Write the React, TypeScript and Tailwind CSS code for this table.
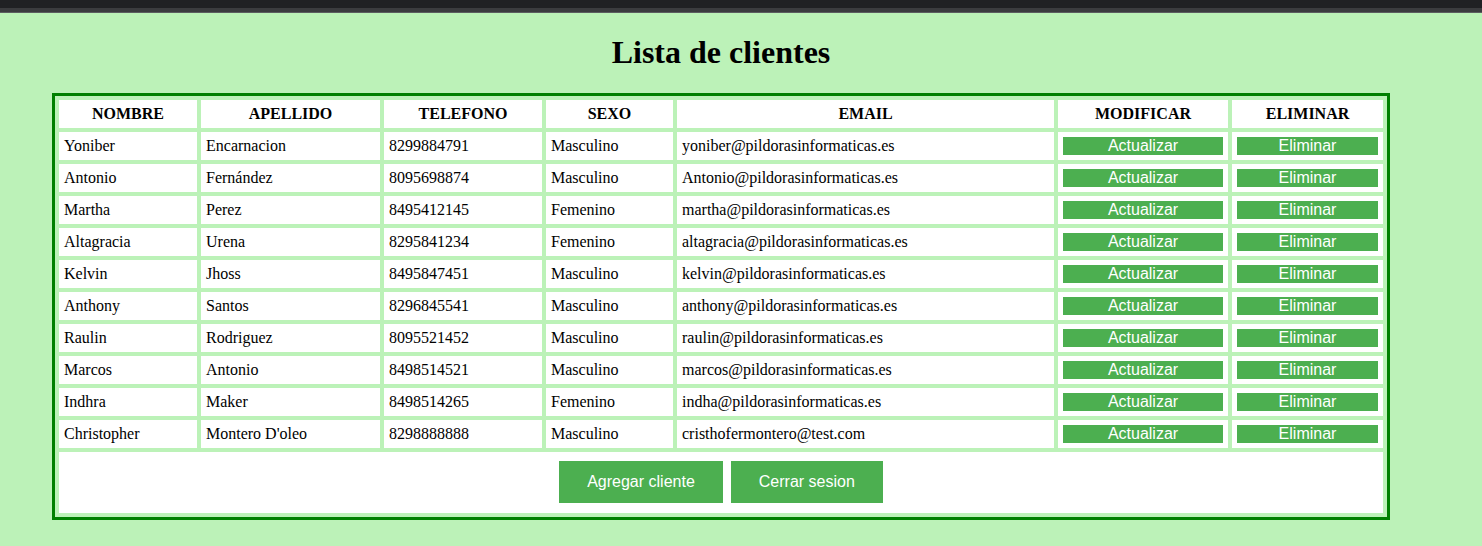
import React from 'react'

const clientes = [
  { nombre: 'Yoniber', apellido: 'Encarnacion', telefono: '8299884791', sexo: 'Masculino', email: 'yoniber@pildorasinformaticas.es' },
  { nombre: 'Antonio', apellido: 'Fernández', telefono: '8095698874', sexo: 'Masculino', email: 'Antonio@pildorasinformaticas.es' },
  { nombre: 'Martha', apellido: 'Perez', telefono: '8495412145', sexo: 'Femenino', email: 'martha@pildorasinformaticas.es' },
  { nombre: 'Altagracia', apellido: 'Urena', telefono: '8295841234', sexo: 'Femenino', email: 'altagracia@pildorasinformaticas.es' },
  { nombre: 'Kelvin', apellido: 'Jhoss', telefono: '8495847451', sexo: 'Masculino', email: 'kelvin@pildorasinformaticas.es' },
  { nombre: 'Anthony', apellido: 'Santos', telefono: '8296845541', sexo: 'Masculino', email: 'anthony@pildorasinformaticas.es' },
  { nombre: 'Raulin', apellido: 'Rodriguez', telefono: '8095521452', sexo: 'Masculino', email: 'raulin@pildorasinformaticas.es' },
  { nombre: 'Marcos', apellido: 'Antonio', telefono: '8498514521', sexo: 'Masculino', email: 'marcos@pildorasinformaticas.es' },
  { nombre: 'Indhra', apellido: 'Maker', telefono: '8498514265', sexo: 'Femenino', email: 'indha@pildorasinformaticas.es' },
  { nombre: 'Christopher', apellido: "Montero D'oleo", telefono: '8298888888', sexo: 'Masculino', email: 'cristhofermontero@test.com' },
]

export default function App() {
  const td = 'bg-white px-[5px] py-[5px] leading-[18px] text-left'
  const th = 'bg-white px-[5px] py-[5px] leading-[18px] font-bold text-center'
  const btn = "block w-full bg-[#4caf50] text-white text-[16px] leading-[18px] font-['Liberation_Sans',Arial,sans-serif]"

  return (
    <div className="min-h-[546px] bg-[#bcf2b8]">
      {/* barra superior del navegador */}
      <div className="h-[8px] bg-[#202124]" />
      <div className="h-[4px] bg-[#3b3c3f]" />
      <div className="h-[1px] bg-[#5c5d60]" />

      <div className="w-[1442px] font-['Liberation_Serif','Times_New_Roman',serif] text-black">
        <h1 className="text-center text-[32px] font-bold leading-[37px] pt-[21px] pb-[22px]">Lista de clientes</h1>

        <table className="mx-auto w-[1338px] table-fixed border-separate border-spacing-[4px] border-[3px] border-[#008000] text-[16px]">
          <thead>
            <tr>
              <th className={`${th} w-[138px]`}>NOMBRE</th>
              <th className={`${th} w-[179px]`}>APELLIDO</th>
              <th className={`${th} w-[158px]`}>TELEFONO</th>
              <th className={`${th} w-[127px]`}>SEXO</th>
              <th className={`${th} w-[377px]`}>EMAIL</th>
              <th className={`${th} w-[170px]`}>MODIFICAR</th>
              <th className={`${th} w-[151px]`}>ELIMINAR</th>
            </tr>
          </thead>
          <tbody>
            {clientes.map((c) => (
              <tr key={c.telefono}>
                <td className={td}>{c.nombre}</td>
                <td className={td}>{c.apellido}</td>
                <td className={td}>{c.telefono}</td>
                <td className={td}>{c.sexo}</td>
                <td className={td}>{c.email}</td>
                <td className={td}>
                  <button className={btn}>Actualizar</button>
                </td>
                <td className={td}>
                  <button className={btn}>Eliminar</button>
                </td>
              </tr>
            ))}
            <tr>
              <td colSpan={7} className="bg-white pt-[9px] pb-[10px]">
                <div className="flex justify-center gap-[8px] font-['Liberation_Sans',Arial,sans-serif]">
                  <button className="bg-[#4caf50] text-white text-[16px] leading-[18px] px-[28px] py-[12px]">Agregar cliente</button>
                  <button className="bg-[#4caf50] text-white text-[16px] leading-[18px] px-[28px] py-[12px]">Cerrar sesion</button>
                </div>
              </td>
            </tr>
          </tbody>
        </table>
      </div>
    </div>
  )
}
